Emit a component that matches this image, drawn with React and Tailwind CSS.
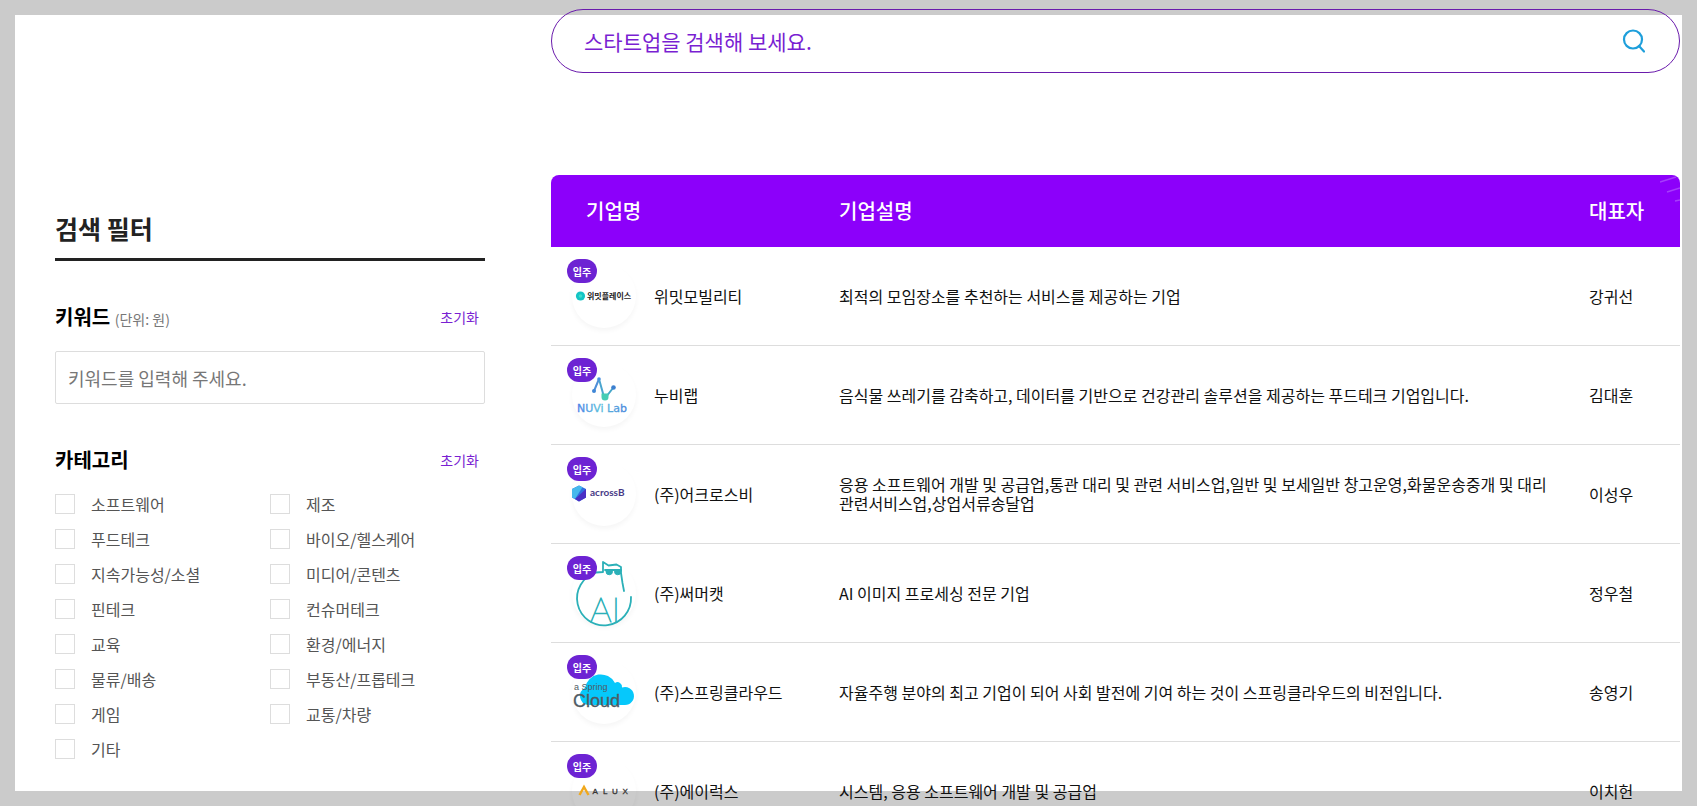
import { useState } from "react";

const categories = [
  "소프트웨어",
  "제조",
  "푸드테크",
  "바이오/헬스케어",
  "지속가능성/소셜",
  "미디어/콘텐츠",
  "핀테크",
  "컨슈머테크",
  "교육",
  "환경/에너지",
  "물류/배송",
  "부동산/프롭테크",
  "게임",
  "교통/차량",
  "기타",
];

const WemeetLogo = () => (
  <svg viewBox="0 0 64 64" className="size-16">
    <circle cx="8.5" cy="32" r="4.6" fill="#14c4c4" />
    <circle cx="8.5" cy="32" r="1.8" fill="#3fdccb" />
    <text x="15" y="35" fontSize="8" fontWeight="700" fill="#222">
      위밋플레이스
    </text>
  </svg>
);

const NuviLogo = () => (
  <svg viewBox="0 0 64 64" className="size-16">
    <defs>
      <linearGradient id="nuvi" x1="0" x2="1">
        <stop offset="0" stopColor="#4a7fe8" />
        <stop offset="0.45" stopColor="#5bc0dd" />
        <stop offset="1" stopColor="#4a86dd" />
      </linearGradient>
    </defs>
    <g fill="none" strokeLinecap="round">
      <path d="M22 28 27 16" stroke="#4f8fd8" strokeWidth="2" />
      <path d="M27 16 32 34" stroke="#4aa5cf" strokeWidth="2" />
      <path d="M34 34 41 25" stroke="#46a6c9" strokeWidth="2" />
    </g>
    <circle cx="22" cy="28" r="2" fill="#3f86d6" />
    <circle cx="27" cy="16" r="1.8" fill="#4a8ee0" />
    <circle cx="41.5" cy="24.5" r="2.3" fill="#3c7fcf" />
    <path d="M29.5 30.5h7v3.5a3.5 3.5 0 0 1-7 0z" fill="#46cdb4" />
    <text
      x="5"
      y="49"
      fontSize="11"
      fontFamily="DejaVu Sans"
      fill="url(#nuvi)"
      stroke="url(#nuvi)"
      strokeWidth="0.3"
    >
      NUVi Lab
    </text>
  </svg>
);

const AcrossLogo = () => (
  <svg viewBox="0 0 64 64" className="size-16">
    <path d="M7 23.5 14 27v8.5L7 39.5 0 35.5V27z" fill="#2f6fe0" />
    <path d="M7 23.5 10.5 25.2 3 37 0 35.5V27z" fill="#46b8ec" />
    <path d="M14 27v8.5L7 39.5 3 37z" fill="#4a2fc4" />
    <text
      x="18"
      y="34"
      fontSize="10"
      fontWeight="700"
      fontFamily="Lato"
      fill="#473a86"
    >
      acrossB
    </text>
  </svg>
);

const SummerCatLogo = () => (
  <svg viewBox="0 0 64 64" className="size-16 overflow-visible">
    <g
      fill="none"
      stroke="#2bb0b8"
      strokeWidth="1.8"
      strokeLinecap="round"
      strokeLinejoin="round"
    >
      <path d="M59 36A27 27 0 1 1 24 11.5L31 11 31 1 36.5 4.5 44.5 3.5 49 6 49 12 50.5 22 52 30" />
      <path d="M33 9h16" />
    </g>
    <path
      d="M34 9h6.5v1.5a3 3 0 0 1-6.5 0zM42.5 9H49v1.5a3 3 0 0 1-6.5 0z"
      fill="#2bb0b8"
      stroke="#2bb0b8"
    />
    <text
      x="18"
      y="61"
      fontSize="34"
      fontWeight="200"
      fontFamily="Lato"
      fill="#2bb0b8"
      stroke="#2bb0b8"
      strokeWidth="1"
    >
      AI
    </text>
  </svg>
);

const SpringCloudLogo = () => (
  <svg viewBox="0 0 64 64" className="size-16 overflow-visible">
    <path
      d="M16 45a9 9 0 0 1-3-17 16 16 0 0 1 30-5 4.5 4.5 0 0 1 7 4.5A9 9 0 1 1 53 45z"
      fill="#06c8fb"
    />
    <g fontFamily="Liberation Sans" fill="#4f5b63">
      <text x="2" y="30" fontSize="9">
        a Spring
      </text>
      <text x="1" y="47" fontSize="18" stroke="#4f5b63" strokeWidth="0.3">
        Cloud
      </text>
    </g>
  </svg>
);

const AluxLogo = () => (
  <svg viewBox="0 0 64 64" className="size-16">
    <path d="M7.5 36 12 28 16.5 36" fill="none" stroke="#f0a81c" strokeWidth="2.4" />
    <text
      x="20.5 31 40 50.5"
      y="35"
      fontSize="8"
      fontFamily="Liberation Sans"
      fill="#333"
      stroke="#333"
      strokeWidth="0.3"
    >
      ALUX
    </text>
  </svg>
);

const companies = [
  {
    name: "위밋모빌리티",
    desc: "최적의 모임장소를 추천하는 서비스를 제공하는 기업",
    ceo: "강귀선",
    Logo: WemeetLogo,
  },
  {
    name: "누비랩",
    desc: "음식물 쓰레기를 감축하고, 데이터를 기반으로 건강관리 솔루션을 제공하는 푸드테크 기업입니다.",
    ceo: "김대훈",
    Logo: NuviLogo,
  },
  {
    name: "(주)어크로스비",
    desc: "응용 소프트웨어 개발 및 공급업,통관 대리 및 관련 서비스업,일반 및 보세일반 창고운영,화물운송중개 및 대리 관련서비스업,상업서류송달업",
    ceo: "이성우",
    Logo: AcrossLogo,
  },
  {
    name: "(주)써머캣",
    desc: "AI 이미지 프로세싱 전문 기업",
    ceo: "정우철",
    Logo: SummerCatLogo,
  },
  {
    name: "(주)스프링클라우드",
    desc: "자율주행 분야의 최고 기업이 되어 사회 발전에 기여 하는 것이 스프링클라우드의 비전입니다.",
    ceo: "송영기",
    Logo: SpringCloudLogo,
  },
  {
    name: "(주)에이럭스",
    desc: "시스템, 응용 소프트웨어 개발 및 공급업",
    ceo: "이치헌",
    Logo: AluxLogo,
  },
];

const ResetButton = ({ onClick }) => (
  <button type="button" onClick={onClick} className="mr-1.5 text-sm text-[#7a1fd2]">
    초기화
  </button>
);

const FilterSidebar = () => {
  const [keyword, setKeyword] = useState("");
  const [checked, setChecked] = useState([]);

  const toggle = (name) =>
    setChecked((prev) =>
      prev.includes(name) ? prev.filter((c) => c !== name) : [...prev, name],
    );

  return (
    <aside className="w-[430px] shrink-0 pt-[195px]">
      <h2 className="border-b-3 border-[#222] pb-3 text-[25px]/9 font-bold text-[#222]">
        검색 필터
      </h2>

      <div className="mt-[42px] flex items-center justify-between">
        <label htmlFor="keyword" className="text-xl/7 font-bold text-black">
          키워드 <span className="text-sm font-normal text-[#777]">(단위: 원)</span>
        </label>
        <ResetButton onClick={() => setKeyword("")} />
      </div>
      <input
        id="keyword"
        type="text"
        value={keyword}
        onChange={(e) => setKeyword(e.target.value)}
        placeholder="키워드를 입력해 주세요."
        className="mt-5 block h-[53px] w-full rounded-xs border border-[#ddd] px-3 text-lg outline-none placeholder:text-[#777]"
      />

      <div className="mt-[42px] flex items-center justify-between">
        <h3 className="text-xl/7 font-bold text-black">카테고리</h3>
        <ResetButton onClick={() => setChecked([])} />
      </div>
      <div className="mt-5 grid grid-cols-2 gap-y-[15px]">
        {categories.map((name) => (
          <label key={name} className="flex items-center gap-4 text-base/5 text-[#555]">
            <input
              type="checkbox"
              checked={checked.includes(name)}
              onChange={() => toggle(name)}
              className="size-5 appearance-none border border-[#ddd] checked:border-[#8c00fa] checked:bg-[#8c00fa]"
            />
            {name}
          </label>
        ))}
      </div>
    </aside>
  );
};

const SearchBar = () => (
  <form
    onSubmit={(e) => e.preventDefault()}
    className="flex h-16 items-center rounded-full border border-[#6a1bac] pl-8 pr-[34px]"
  >
    <input
      type="search"
      aria-label="스타트업 검색"
      placeholder="스타트업을 검색해 보세요."
      className="h-full min-w-0 flex-1 text-[21px] outline-none placeholder:text-[#7a1fd2]"
    />
    <button type="submit" aria-label="검색">
      <svg
        viewBox="0 0 24 24"
        className="size-6"
        fill="none"
        stroke="#1e9fdb"
        strokeWidth="2.2"
        strokeLinecap="round"
      >
        <circle cx="12" cy="10.5" r="9" />
        <path d="m18 17 5 5.5" />
      </svg>
    </button>
  </form>
);

const CompanyTable = () => (
  <table className="mt-[102px] w-full table-fixed border-separate border-spacing-0 text-left">
    <colgroup>
      <col className="w-[288px]" />
      <col />
      <col className="w-[91px]" />
    </colgroup>
    <thead>
      <tr className="h-[72px] text-xl text-white [&>th]:bg-[#8c00fa] [&>th]:font-medium">
        <th className="rounded-tl-lg pl-[35px]">기업명</th>
        <th>기업설명</th>
        <th className="relative overflow-hidden rounded-tr-lg">
          대표자
          {/* corner streaks */}
          <svg
            viewBox="0 0 20 28"
            className="absolute right-0 top-0 h-7 w-5"
            stroke="#a63dfb"
            strokeWidth="1.5"
            aria-hidden="true"
          >
            <path d="M0 7 16 2M7 17l13-4M15 26l5-1" />
          </svg>
        </th>
      </tr>
    </thead>
    <tbody>
      {companies.map(({ name, desc, ceo, Logo }) => (
        <tr key={name} className="h-[99px] text-base/[19px] text-[#111] [&>td]:border-b [&>td]:border-[#ddd]">
          <td className="pl-[21px]">
            <div className="flex items-center gap-[18px]">
              <div className="relative size-16 shrink-0 rounded-full shadow-[0_3px_5px_rgba(0,0,0,0.04)]">
                <Logo />
                <span className="absolute -left-[5px] -top-[5px] flex h-6 w-[30px] items-center justify-center rounded-full bg-[#6d23d3] text-[10px] font-bold text-white">
                  입주
                </span>
              </div>
              {name}
            </div>
          </td>
          <td className="break-keep pr-5">{desc}</td>
          <td>{ceo}</td>
        </tr>
      ))}
    </tbody>
  </table>
);

export default function App() {
  return (
    <div className="h-screen overflow-hidden bg-[#cbcbcb] p-[15px] font-['Noto_Sans_CJK_KR',sans-serif]">
      <div className="flex h-full gap-[66px] bg-white pl-10 pr-0.5">
        <FilterSidebar />
        {/* results run past the top and bottom of the white panel */}
        <main className="-mt-1.5 min-w-0 flex-1">
          <SearchBar />
          <CompanyTable />
        </main>
      </div>
    </div>
  );
}
